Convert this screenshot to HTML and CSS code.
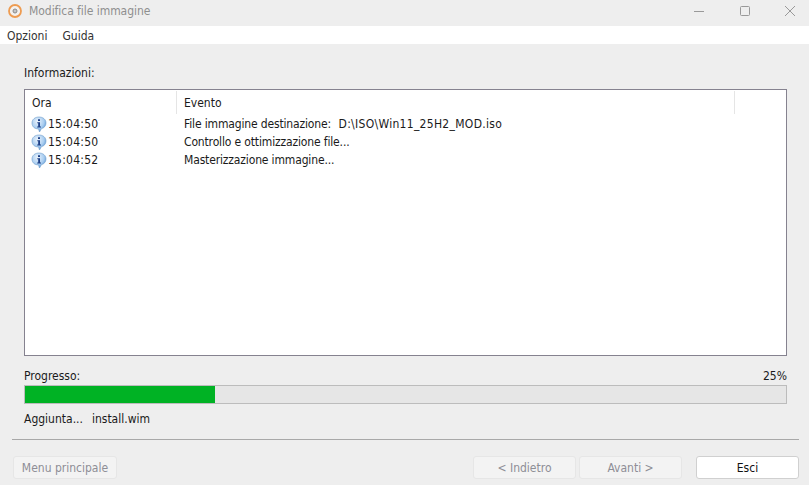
FILE: index.html
```html
<!DOCTYPE html>
<html lang="it">
<head>
<meta charset="utf-8">
<title>Modifica file immagine</title>
<link rel="stylesheet" href="styles.css">
</head>
<body>
<div class="window">
  <header class="titlebar">
    <svg class="app-icon" width="16" height="16" viewBox="0 0 16 16"><circle cx="8" cy="8" r="6" fill="#f4f1ee" stroke="#ee9b50" stroke-width="1.800"/><circle cx="8" cy="8" r="2" fill="#c4c4c4" stroke="#8a8a8a" stroke-width="1"/></svg>
    <span class="title">Modifica file immagine</span>
    <div class="controls">
      <svg width="10" height="10" viewBox="0 0 10 10"><path d="M0 5.500H10" stroke="#999" stroke-width="1" fill="none"/></svg>
      <svg width="10" height="10" viewBox="0 0 10 10"><rect x="0.500" y="0.500" width="9" height="9" rx="1" stroke="#999" stroke-width="1" fill="none"/></svg>
      <svg width="10" height="10" viewBox="0 0 10 10"><path d="M0 0L10 10M10 0L0 10" stroke="#999" stroke-width="1" fill="none"/></svg>
    </div>
  </header>
  <nav class="menubar"><span>Opzioni</span><span>Guida</span></nav>
  <main class="content">
    <div class="label info-label">Informazioni:</div>
    <section class="list">
      <div class="list-head">
        <div class="col-time">Ora</div>
        <div class="col-event">Evento</div>
        <div class="col-rest"></div>
      </div>
      <div class="row">
        <div class="cell-time"><svg class="info" width="16" height="17" viewBox="0 0 16 17"><use href="#i"/></svg>15:04:50</div>
        <div class="cell-event">File immagine destinazione:&nbsp; <span class="path">D:\ISO\Win11_25H2_MOD.iso</span></div>
      </div>
      <div class="row">
        <div class="cell-time"><svg class="info" width="16" height="17" viewBox="0 0 16 17"><use href="#i"/></svg>15:04:50</div>
        <div class="cell-event">Controllo e ottimizzazione file...</div>
      </div>
      <div class="row">
        <div class="cell-time"><svg class="info" width="16" height="17" viewBox="0 0 16 17"><use href="#i"/></svg>15:04:52</div>
        <div class="cell-event">Masterizzazione immagine...</div>
      </div>
    </section>
    <div class="progress-head"><span>Progresso:</span><span>25%</span></div>
    <div class="progress"><div class="bar" style="width:25%"></div></div>
    <div class="status"><span>Aggiunta...</span><span>install.wim</span></div>
  </main>
  <div class="divider"></div>
  <footer class="buttons">
    <button class="btn disabled menu-btn" disabled>Menu principale</button>
    <div class="spacer"></div>
    <button class="btn disabled nav-btn" disabled>&lt; Indietro</button>
    <button class="btn disabled nav-btn" disabled>Avanti &gt;</button>
    <button class="btn exit">Esci</button>
  </footer>
</div>
<svg class="defs" width="0" height="0">
  <defs>
    <radialGradient id="bub" cx="40%" cy="30%" r="75%"><stop offset="0" stop-color="#eaf3fc"/><stop offset="0.6" stop-color="#a9cdf0"/><stop offset="1" stop-color="#4f8fd0"/></radialGradient>
    <g id="i">
      <path d="M8 1C12 1 15 3.400 15 7C15 10 13 12 10.500 12.600L8.500 16L7.500 12.900C3.500 13 1 10.500 1 7C1 3.400 4 1 8 1Z" fill="url(#bub)" stroke="#6d9ccb" stroke-width="0.6"/>
      <path d="M7 3.200H9V5H7ZM6.300 6.200H9V10.600H10V11.600H6.200V10.600H7.200V7.200H6.300Z" fill="#1c3f86"/>
    </g>
  </defs>
</svg>
</body>
</html>
```
FILE: styles.css
```css
* { box-sizing: border-box; }
html, body { margin: 0; padding: 0; }
body {
  width: 809px;
  height: 485px;
  overflow: hidden;
  background: #eeeeee;
  font-family: "DejaVu Sans", "Noto Sans", sans-serif;
  font-stretch: condensed;
  font-size: 12px;
  color: #1a1a1a;
}
.window { display: flex; flex-direction: column; height: 485px; }
.titlebar { flex: none; height: 26px; display: flex; align-items: center; padding: 0 0 5px 7px; background: #eeeeee; }
.app-icon { flex: none; }
.title { margin-left: 6px; padding-top: 1px; font-size: 12px; letter-spacing: -0.05px; color: #8f8f8f; }
.controls { margin-left: auto; display: flex; align-items: center; gap: 35.5px; padding-right: 14px; }
.menubar { flex: none; height: 18px; background: #fff; display: flex; align-items: center; gap: 15px; padding: 1px 0 0 7px; color: #333; }
.content { flex: none; padding: 0 22px 0 24px; display: flex; flex-direction: column; }
.info-label { margin-top: 20px; height: 25px; line-height: 18px; }
.list { width: 763px; height: 267px; background: #fff; border: 1px solid #85828f; }
.list-head { display: flex; height: 25px; padding-top: 1px; }
.col-time { width: 152px; padding: 5px 0 0 7px; border-right: 1px solid #e5e5e5; height: 23px; }
.col-event { width: 558px; padding: 5px 0 0 7px; border-right: 1px solid #e5e5e5; height: 23px; }
.col-rest { flex: 1; }
.row { display: flex; height: 18px; align-items: center; }
.cell-time { width: 153px; padding-left: 6px; display: flex; align-items: center; gap: 1px; letter-spacing: 0.25px; }
.info { flex: none; }
.cell-event { padding-left: 6px; letter-spacing: -0.15px; }
.path { margin-left: 1px; letter-spacing: 0.3px; }
.progress-head { display: flex; justify-content: space-between; margin-top: 11px; width: 763px; height: 18px; line-height: 18px; }
.progress { width: 763px; height: 19px; background: #e6e6e6; border: 1px solid #bcbcbc; }
.bar { height: 100%; background: #00b224; }
.status { display: flex; gap: 9px; margin-top: 6px; height: 18px; line-height: 18px; }
.divider { flex: none; margin: 11px 10px 0 12px; height: 1px; background: #a8a8a8; }
.buttons { flex: none; display: flex; margin-top: 16px; padding: 0 10px 0 13px; }
.spacer { flex: 1; }
.btn { height: 23px; border-radius: 3px; font: inherit; padding: 0; }
.disabled { background: #f3f3f3; border: 1px solid #e6e6e6; color: #8e8e96; }
.menu-btn { width: 104px; }
.nav-btn { width: 103px; margin-left: 3px; }
.exit { width: 103px; margin-left: 14px; background: #fff; border: 1px solid #d0d0d0; color: #111; }
.defs { position: absolute; }
```
